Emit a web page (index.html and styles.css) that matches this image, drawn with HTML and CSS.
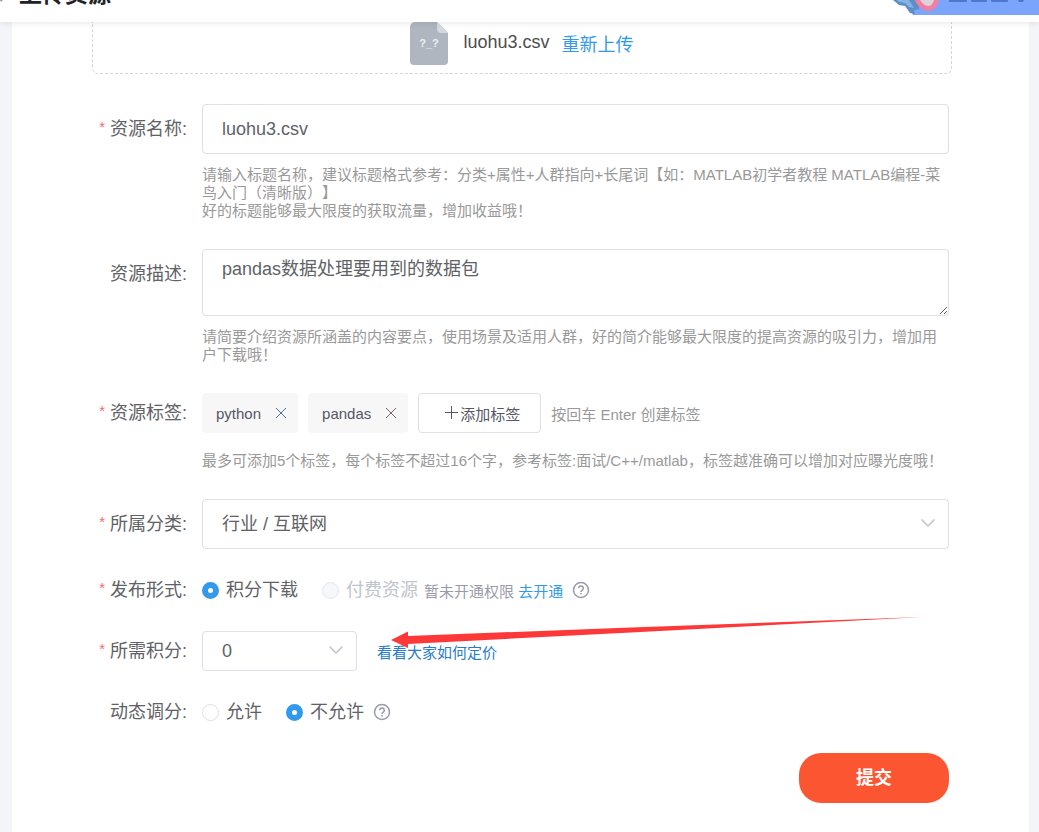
FILE: index.html
```html
<!DOCTYPE html>
<html lang="zh-CN">
<head>
    <meta charset="UTF-8" />
    <meta name="viewport" content="width=device-width, initial-scale=1.0" />
    <title>上传资源</title>
    <link rel="stylesheet" href="styles.css">
</head>
<body>
    <header class="topbar">
        <svg class="back" width="12" height="22" viewBox="0 0 12 22"><path d="M10 1L1 10l9 9" fill="none" stroke="#999" stroke-width="2" /></svg>
        <h1 class="title">上传资源</h1>
        <svg class="banner" width="146" height="15" viewBox="0 0 146 15">
            <path d="M10 0h136v15H20z" fill="#7ba4fb" />
            <path d="M0 0h26v9l-5 1 1 4-5-1-5-7-6-1z" fill="#5d8ec6" />
            <path d="M4 0h12l5 8-5-1-4-4-6-1z" fill="#86b2e5" />
            <path d="M22 0h24c-1 7-6 11-11 11S24 6 22 0z" fill="#ef7fa3" />
            <path d="M27 0h14c-1 4-3 6-6 6s-6-3-8-6z" fill="#ddd2d7" />
            <g fill="#4f76cf">
                <rect x="56" y="-2" width="18" height="4" rx="1" />
                <rect x="78" y="-2" width="16" height="4" rx="1" />
                <rect x="98" y="-2" width="17" height="4" rx="1" />
                <path d="M125 0h6l-1 2h-4z" />
            </g>
        </svg>
    </header>

    <main class="panel">
        <div class="upload-box">
            <svg width="38" height="43" viewBox="0 0 38 43">
                <path d="M5 0h22l11 11v28a4 4 0 0 1-4 4H4a4 4 0 0 1-4-4V5a5 5 0 0 1 5-5z" fill="#afb6c0" />
                <path d="M27 0l11 11h-7a4 4 0 0 1-4-4z" fill="#d3d9e3" />
                <text class="file-face" x="19" y="25" text-anchor="middle">?_?</text>
            </svg>
            <span class="file-name">luohu3.csv</span>
            <a class="reupload" href="#">重新上传</a>
        </div>

        <form class="form">
            <div class="row">
                <label class="label required" for="resName">资源名称:</label>
                <div class="field">
                    <input class="control" type="text" id="resName" value="luohu3.csv">
                    <p class="hint">请输入标题名称，建议标题格式参考：分类+属性+人群指向+长尾词【如：MATLAB初学者教程 MATLAB编程-菜鸟入门（清晰版）】<br>好的标题能够最大限度的获取流量，增加收益哦！</p>
                </div>
            </div>

            <div class="row">
                <label class="label" for="resDesc">资源描述:</label>
                <div class="field">
                    <textarea class="control area" id="resDesc">pandas数据处理要用到的数据包</textarea>
                    <p class="hint">请简要介绍资源所涵盖的内容要点，使用场景及适用人群，好的简介能够最大限度的提高资源的吸引力，增加用户下载哦！</p>
                </div>
            </div>

            <div class="row row-mid">
                <span class="label required">资源标签:</span>
                <div class="field">
                    <div class="tags">
                        <span class="tag">python
                            <button class="tag-close" type="button" aria-label="删除 python"><svg width="10" height="10" viewBox="0 0 10 10"><path d="M0 0l10 10M10 0L0 10" stroke="#4f7196" /></svg></button>
                        </span>
                        <span class="tag">pandas
                            <button class="tag-close" type="button" aria-label="删除 pandas"><svg width="10" height="10" viewBox="0 0 10 10"><path d="M0 0l10 10M10 0L0 10" stroke="#7d6464" /></svg></button>
                        </span>
                        <button class="add-tag" type="button"><svg width="18" height="18" viewBox="0 0 18 18"><path d="M3 8.500h13M9.500 2v13" stroke="#555666" /></svg>添加标签</button>
                        <span class="tag-note">按回车 Enter 创建标签</span>
                    </div>
                    <p class="hint hint-tags">最多可添加5个标签，每个标签不超过16个字，参考标签:面试/C++/matlab，标签越准确可以增加对应曝光度哦！</p>
                </div>
            </div>

            <div class="row">
                <label class="label required" for="category">所属分类:</label>
                <div class="field select-wrap">
                    <select class="control" id="category">
                        <option>行业 / 互联网</option>
                    </select>
                    <svg class="chevron" width="14" height="8" viewBox="0 0 14 8"><path d="M.5.5L7 7 13.500.5" /></svg>
                </div>
            </div>

            <div class="row row-small">
                <span class="label required">发布形式:</span>
                <div class="options">
                    <label class="option"><input class="radio" type="radio" name="publish" checked>积分下载</label>
                    <label class="option disabled"><input class="radio" type="radio" name="publish" disabled>付费资源</label>
                    <span class="notice">暂未开通权限 <a href="#">去开通</a></span>
                    <svg class="help" width="18" height="18" viewBox="0 0 18 18"><circle cx="9" cy="9" r="7.500" /><path d="M6.700 7.200a2.300 2.300 0 1 1 3.500 2c-.8.500-1.200.8-1.200 1.700M9 12v1.500" /></svg>
                </div>
            </div>

            <div class="row row-mid">
                <label class="label required" for="points">所需积分:</label>
                <div class="points">
                    <div class="select-wrap points-select">
                        <select class="control control-mid" id="points">
                            <option>0</option>
                        </select>
                        <svg class="chevron" width="14" height="8" viewBox="0 0 14 8"><path d="M.5.5L7 7 13.500.5" /></svg>
                    </div>
                    <a class="pricing" href="#">看看大家如何定价</a>
                </div>
            </div>

            <div class="row row-small">
                <span class="label">动态调分:</span>
                <div class="options">
                    <label class="option"><input class="radio" type="radio" name="dynamic">允许</label>
                    <label class="option"><input class="radio" type="radio" name="dynamic" checked>不允许</label>
                    <svg class="help" width="18" height="18" viewBox="0 0 18 18"><circle cx="9" cy="9" r="7.500" /><path d="M6.700 7.200a2.300 2.300 0 1 1 3.500 2c-.8.500-1.200.8-1.200 1.700M9 12v1.500" /></svg>
                </div>
            </div>

            <button class="submit" type="submit">提交</button>
        </form>
    </main>

    <!-- red arrow pointing at the points select -->
    <svg class="arrow" width="532" height="32" viewBox="0 0 532 32"><path d="M0 24L17 15.500V20L240 11.500 532 1 240 16.500 17 28v4z" fill="#fd3838" /></svg>
</body>
</html>
```
FILE: styles.css
```css
* {
    box-sizing: border-box;
}
body {
    margin: 0;
    position: relative;
    background: #f4f5f8;
    color: #555666;
    font-family: "Liberation Sans", "Noto Sans CJK SC", sans-serif;
    font-size: 18px;
    text-spacing-trim: space-all;
}
a {
    color: #3399ea;
    text-decoration: none;
}
input, textarea, select, button {
    font: inherit;
    color: inherit;
}

/* header, scrolled so only its lower part shows */
.topbar {
    position: relative;
    z-index: 2;
    display: flex;
    align-items: flex-end;
    height: 22px;
    background: #fff;
    box-shadow: 0 2px 6px rgba(0, 0, 0, 0.08);
    clip-path: inset(0 0 -10px 0);
}
.back {
    margin: 0 15px 18px -8px;
}
.title {
    margin: 0 0 16px;
    color: #222226;
    font-size: 23px;
    line-height: 24px;
}
.banner {
    position: absolute;
    top: 0;
    right: 0;
}

.panel {
    min-height: calc(100vh - 22px);
    margin: 0 10px 0 12px;
    padding: 0 77px 28px 80px;
    background: #fff;
}
.upload-box {
    display: flex;
    justify-content: center;
    height: 52px;
    border: 1px dashed #d3d4d9;
    border-top: none;
    border-radius: 0 0 6px 6px;
}
.file-face {
    fill: #eceff3;
    font-size: 11px;
    font-weight: bold;
}
.file-name {
    margin: 0 12px 0 15px;
    color: #4d4d4d;
    line-height: 40px;
}
.reupload {
    line-height: 46px;
}

.form {
    display: flex;
    flex-direction: column;
    gap: 29px;
    padding: 30px 3px 0 0;
}
.row {
    display: grid;
    grid-template-columns: 95px minmax(0, 1fr);
    column-gap: 15px;
}
.label {
    color: #606266;
    line-height: 50px;
    text-align: right;
    white-space: nowrap;
}
.row-mid .label {
    line-height: 40px;
}
.row-small .label {
    line-height: 24px;
}
.required::before {
    content: "*";
    margin-right: 5px;
    color: #f56c6c;
    font-size: 15px;
    line-height: 1;
    vertical-align: 3px;
}
.control {
    display: block;
    width: 100%;
    height: 50px;
    padding: 0 19px;
    border: 1px solid #dcdfe6;
    border-radius: 4px;
    background: #fff;
    color: #606266;
    appearance: none;
}
.area {
    height: 67px;
    padding: 6px 19px;
    line-height: 27px;
    resize: vertical;
}
.control-mid {
    height: 40px;
}
.hint {
    margin: 12px 0 0;
    color: #999;
    font-size: 15px;
    line-height: 18px;
}
.hint-tags {
    margin-top: 19px;
}

.tags {
    display: flex;
    align-items: center;
    gap: 10px;
    height: 40px;
    font-size: 15px;
}
.tag {
    display: flex;
    align-items: center;
    gap: 15px;
    height: 40px;
    padding: 0 12px 0 14px;
    border-radius: 4px;
    background: #f7f7f7;
}
.tag-close {
    display: flex;
    padding: 0;
    border: none;
    background: none;
}
.add-tag {
    display: flex;
    align-items: center;
    height: 40px;
    padding: 0 20px 0 23px;
    border: 1px solid #dcdfe6;
    border-radius: 4px;
    background: #fff;
}
.tag-note {
    color: #999;
}

.select-wrap {
    position: relative;
}
.chevron {
    position: absolute;
    top: 50%;
    right: 14px;
    margin-top: -5px;
    fill: none;
    stroke: #c0c4cc;
    stroke-width: 1.5;
    pointer-events: none;
}
.points {
    display: flex;
    align-items: center;
    gap: 20px;
}
.points-select {
    width: 155px;
}
.pricing {
    color: #277ccc;
    font-size: 15px;
}

.options {
    display: flex;
    align-items: center;
    height: 24px;
}
.option {
    display: flex;
    align-items: center;
    gap: 7px;
    color: #606266;
    line-height: 24px;
}
.option + .option {
    margin-left: 24px;
}
.radio {
    width: 17px;
    height: 17px;
    margin: 0;
    border: 1px solid #dcdfe6;
    border-radius: 50%;
    background: #fff;
    appearance: none;
}
.radio:checked {
    border: 6px solid #3399ea;
}
.radio:disabled {
    border-color: #e4e7ed;
    background: #f5f7fa;
}
.disabled {
    color: #c0c4cc;
}
.notice {
    margin-left: 6px;
    color: #999aaa;
    font-size: 15px;
}
.help {
    margin-left: 9px;
    fill: none;
    stroke: #999aaa;
    stroke-width: 1.5;
}

.submit {
    align-self: flex-end;
    width: 150px;
    height: 50px;
    padding: 0 0 4px;
    border: none;
    border-radius: 22px;
    background: #fc5531;
    color: #fff;
    font-weight: bold;
}
.arrow {
    position: absolute;
    top: 616px;
    left: 391px;
    pointer-events: none;
}
```
